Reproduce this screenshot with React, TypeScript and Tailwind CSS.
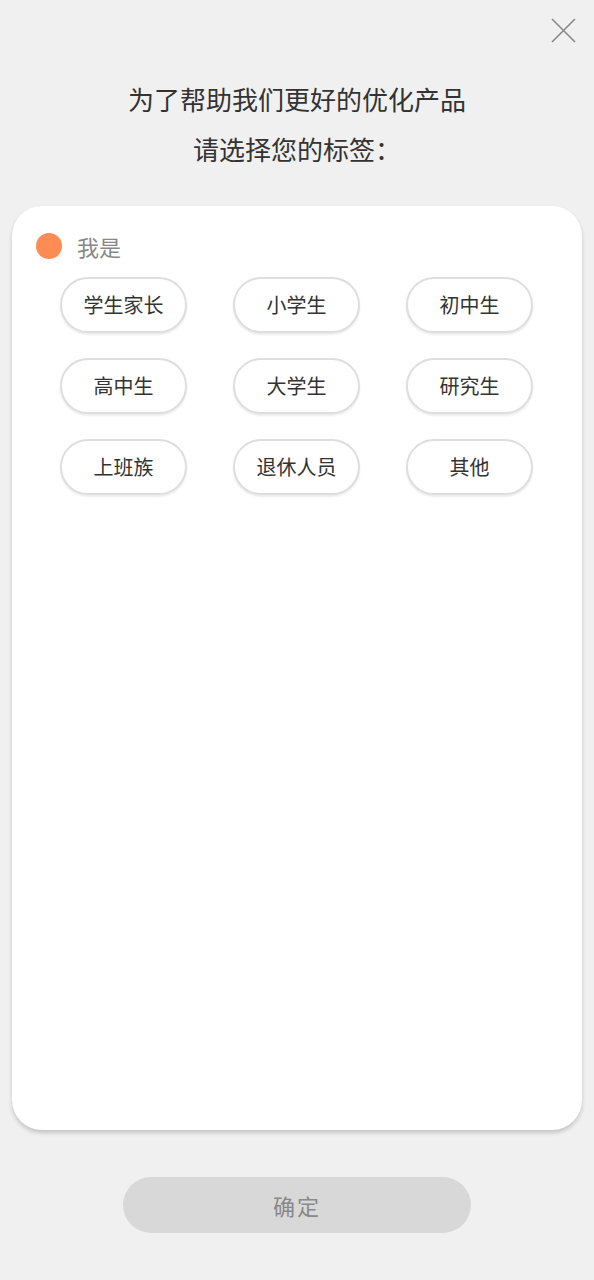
const tags = ['学生家长', '小学生', '初中生', '高中生', '大学生', '研究生', '上班族', '退休人员', '其他'];

const font = { fontFamily: '"Noto Sans CJK SC", "Noto Sans", sans-serif' };

export default function App() {
  return (
    <div className="min-h-[1280px] w-[594px] bg-[#f0f0f0] flex flex-col" style={font}>
      <div className="flex justify-end pt-[18px] pr-[18px]">
        <svg width="25" height="25" viewBox="0 0 25 25" className="text-[#888]">
          <path d="M1 1L24 24M24 1L1 24" stroke="currentColor" strokeWidth="1.6" fill="none" />
        </svg>
      </div>
      <div className="mt-[31px] flex flex-col items-center text-[26px] text-[#333] leading-[50px]">
        <p>为了帮助我们更好的优化产品</p>
        <p>请选择您的标签：</p>
      </div>
      <div className="mx-[12px] mt-[32px] h-[924px] rounded-[30px] bg-white shadow-[0_3px_4px_rgba(0,0,0,0.18)] pt-[26px]">
        <div className="flex items-center pl-[24px]">
          <span className="w-[26px] h-[26px] rounded-full bg-[#ff8c55]" />
          <span className="ml-[15px] text-[22px] text-[#888] leading-[28px]">我是</span>
        </div>
        <div className="grid grid-cols-[127px_127px_127px] gap-x-[46px] gap-y-[25px] mt-[17px] pl-[48px]">
          {tags.map(t => (
            <div
              key={t}
              className="h-[56px] rounded-full border-2 border-[#dedede] bg-white shadow-[0_2px_2px_rgba(0,0,0,0.08)] flex items-center justify-center text-[20px] text-[#333]"
            >
              {t}
            </div>
          ))}
        </div>
      </div>
      <div className="flex justify-center mt-[47px]">
        <div className="w-[348px] h-[56px] rounded-full bg-[#d8d8d8] flex items-center justify-center text-[22px] text-[#888] tracking-[2px]">
          确定
        </div>
      </div>
    </div>
  );
}
